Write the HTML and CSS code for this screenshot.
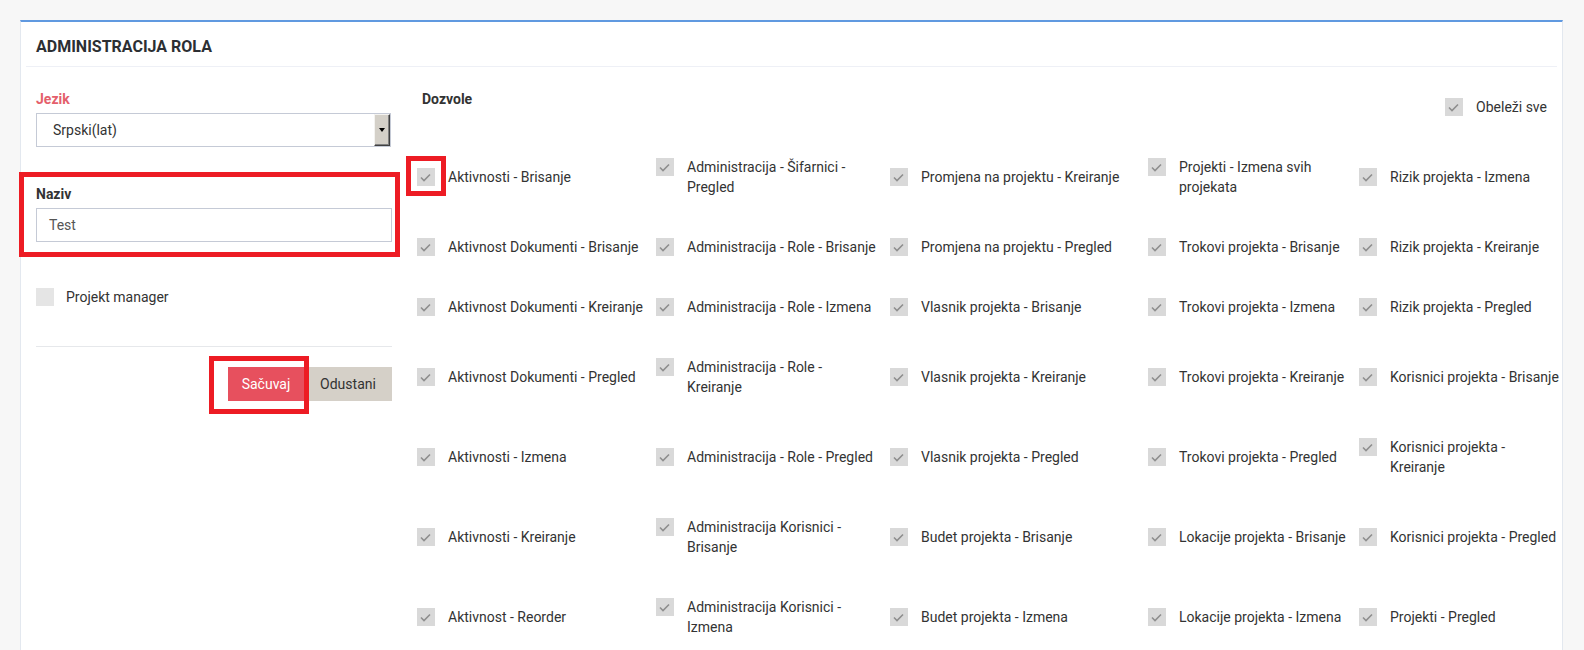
FILE: index.html
```html
<!DOCTYPE html>
<html lang="sr">
<head>
<meta charset="utf-8">
<title>Administracija rola</title>
<link rel="stylesheet" href="styles.css">
</head>
<body>
<section class="panel">
  <header class="panel-head"><h1 class="panel-title">ADMINISTRACIJA ROLA</h1></header>
  <div class="panel-body">
    <div class="form-col">
      <div class="lbl lbl-req">Jezik</div>
      <div class="select"><span class="select-val">Srpski(lat)</span><span class="select-btn"><span class="arrow"></span></span></div>
      <div class="lbl lbl-naziv">Naziv</div>
      <div class="input">Test</div>
      <div class="pm-row"><span class="cb cb-empty"></span><span class="pm-text">Projekt manager</span></div>
      <div class="divider"></div>
      <div class="actions"><button class="btn btn-save">Sačuvaj</button><button class="btn btn-cancel">Odustani</button></div>
    </div>
    <div class="perm-col">
      <div class="perm-head">
        <span class="perm-title">Dozvole</span>
        <span class="perm select-all"><span class="cb"><svg viewBox="0 0 18 18"><path d="M4 9.5 7 12.5 13 6.5"/></svg></span><span class="perm-text">Obeleži sve</span></span>
      </div>
      <div class="perm-grid">
        <div class="perm"><span class="cb"><svg viewBox="0 0 18 18"><path d="M4 9.5 7 12.5 13 6.5"/></svg></span><span class="perm-text">Aktivnosti - Brisanje</span></div>
        <div class="perm"><span class="cb"><svg viewBox="0 0 18 18"><path d="M4 9.5 7 12.5 13 6.5"/></svg></span><span class="perm-text">Administracija - Šifarnici -<br>Pregled</span></div>
        <div class="perm"><span class="cb"><svg viewBox="0 0 18 18"><path d="M4 9.5 7 12.5 13 6.5"/></svg></span><span class="perm-text">Promjena na projektu - Kreiranje</span></div>
        <div class="perm"><span class="cb"><svg viewBox="0 0 18 18"><path d="M4 9.5 7 12.5 13 6.5"/></svg></span><span class="perm-text">Projekti - Izmena svih<br>projekata</span></div>
        <div class="perm"><span class="cb"><svg viewBox="0 0 18 18"><path d="M4 9.5 7 12.5 13 6.5"/></svg></span><span class="perm-text">Rizik projekta - Izmena</span></div>

        <div class="perm"><span class="cb"><svg viewBox="0 0 18 18"><path d="M4 9.5 7 12.5 13 6.5"/></svg></span><span class="perm-text">Aktivnost Dokumenti - Brisanje</span></div>
        <div class="perm"><span class="cb"><svg viewBox="0 0 18 18"><path d="M4 9.5 7 12.5 13 6.5"/></svg></span><span class="perm-text">Administracija - Role - Brisanje</span></div>
        <div class="perm"><span class="cb"><svg viewBox="0 0 18 18"><path d="M4 9.5 7 12.5 13 6.5"/></svg></span><span class="perm-text">Promjena na projektu - Pregled</span></div>
        <div class="perm"><span class="cb"><svg viewBox="0 0 18 18"><path d="M4 9.5 7 12.5 13 6.5"/></svg></span><span class="perm-text">Trokovi projekta - Brisanje</span></div>
        <div class="perm"><span class="cb"><svg viewBox="0 0 18 18"><path d="M4 9.5 7 12.5 13 6.5"/></svg></span><span class="perm-text">Rizik projekta - Kreiranje</span></div>

        <div class="perm"><span class="cb"><svg viewBox="0 0 18 18"><path d="M4 9.5 7 12.5 13 6.5"/></svg></span><span class="perm-text">Aktivnost Dokumenti - Kreiranje</span></div>
        <div class="perm"><span class="cb"><svg viewBox="0 0 18 18"><path d="M4 9.5 7 12.5 13 6.5"/></svg></span><span class="perm-text">Administracija - Role - Izmena</span></div>
        <div class="perm"><span class="cb"><svg viewBox="0 0 18 18"><path d="M4 9.5 7 12.5 13 6.5"/></svg></span><span class="perm-text">Vlasnik projekta - Brisanje</span></div>
        <div class="perm"><span class="cb"><svg viewBox="0 0 18 18"><path d="M4 9.5 7 12.5 13 6.5"/></svg></span><span class="perm-text">Trokovi projekta - Izmena</span></div>
        <div class="perm"><span class="cb"><svg viewBox="0 0 18 18"><path d="M4 9.5 7 12.5 13 6.5"/></svg></span><span class="perm-text">Rizik projekta - Pregled</span></div>

        <div class="perm"><span class="cb"><svg viewBox="0 0 18 18"><path d="M4 9.5 7 12.5 13 6.5"/></svg></span><span class="perm-text">Aktivnost Dokumenti - Pregled</span></div>
        <div class="perm"><span class="cb"><svg viewBox="0 0 18 18"><path d="M4 9.5 7 12.5 13 6.5"/></svg></span><span class="perm-text">Administracija - Role -<br>Kreiranje</span></div>
        <div class="perm"><span class="cb"><svg viewBox="0 0 18 18"><path d="M4 9.5 7 12.5 13 6.5"/></svg></span><span class="perm-text">Vlasnik projekta - Kreiranje</span></div>
        <div class="perm"><span class="cb"><svg viewBox="0 0 18 18"><path d="M4 9.5 7 12.5 13 6.5"/></svg></span><span class="perm-text">Trokovi projekta - Kreiranje</span></div>
        <div class="perm"><span class="cb"><svg viewBox="0 0 18 18"><path d="M4 9.5 7 12.5 13 6.5"/></svg></span><span class="perm-text">Korisnici projekta - Brisanje</span></div>

        <div class="perm"><span class="cb"><svg viewBox="0 0 18 18"><path d="M4 9.5 7 12.5 13 6.5"/></svg></span><span class="perm-text">Aktivnosti - Izmena</span></div>
        <div class="perm"><span class="cb"><svg viewBox="0 0 18 18"><path d="M4 9.5 7 12.5 13 6.5"/></svg></span><span class="perm-text">Administracija - Role - Pregled</span></div>
        <div class="perm"><span class="cb"><svg viewBox="0 0 18 18"><path d="M4 9.5 7 12.5 13 6.5"/></svg></span><span class="perm-text">Vlasnik projekta - Pregled</span></div>
        <div class="perm"><span class="cb"><svg viewBox="0 0 18 18"><path d="M4 9.5 7 12.5 13 6.5"/></svg></span><span class="perm-text">Trokovi projekta - Pregled</span></div>
        <div class="perm"><span class="cb"><svg viewBox="0 0 18 18"><path d="M4 9.5 7 12.5 13 6.5"/></svg></span><span class="perm-text">Korisnici projekta -<br>Kreiranje</span></div>

        <div class="perm"><span class="cb"><svg viewBox="0 0 18 18"><path d="M4 9.5 7 12.5 13 6.5"/></svg></span><span class="perm-text">Aktivnosti - Kreiranje</span></div>
        <div class="perm"><span class="cb"><svg viewBox="0 0 18 18"><path d="M4 9.5 7 12.5 13 6.5"/></svg></span><span class="perm-text">Administracija Korisnici -<br>Brisanje</span></div>
        <div class="perm"><span class="cb"><svg viewBox="0 0 18 18"><path d="M4 9.5 7 12.5 13 6.5"/></svg></span><span class="perm-text">Budet projekta - Brisanje</span></div>
        <div class="perm"><span class="cb"><svg viewBox="0 0 18 18"><path d="M4 9.5 7 12.5 13 6.5"/></svg></span><span class="perm-text">Lokacije projekta - Brisanje</span></div>
        <div class="perm"><span class="cb"><svg viewBox="0 0 18 18"><path d="M4 9.5 7 12.5 13 6.5"/></svg></span><span class="perm-text">Korisnici projekta - Pregled</span></div>

        <div class="perm"><span class="cb"><svg viewBox="0 0 18 18"><path d="M4 9.5 7 12.5 13 6.5"/></svg></span><span class="perm-text">Aktivnost - Reorder</span></div>
        <div class="perm"><span class="cb"><svg viewBox="0 0 18 18"><path d="M4 9.5 7 12.5 13 6.5"/></svg></span><span class="perm-text">Administracija Korisnici -<br>Izmena</span></div>
        <div class="perm"><span class="cb"><svg viewBox="0 0 18 18"><path d="M4 9.5 7 12.5 13 6.5"/></svg></span><span class="perm-text">Budet projekta - Izmena</span></div>
        <div class="perm"><span class="cb"><svg viewBox="0 0 18 18"><path d="M4 9.5 7 12.5 13 6.5"/></svg></span><span class="perm-text">Lokacije projekta - Izmena</span></div>
        <div class="perm"><span class="cb"><svg viewBox="0 0 18 18"><path d="M4 9.5 7 12.5 13 6.5"/></svg></span><span class="perm-text">Projekti - Pregled</span></div>
      </div>
    </div>
  </div>
</section>
<div class="mark mark-naziv"></div>
<div class="mark mark-save"></div>
<div class="mark mark-cb"></div>
</body>
</html>
```

FILE: styles.css
```css
* { box-sizing: border-box; }

html, body {
  margin: 0;
  padding: 0;
  background: #f7f7f7;
  font-family: Roboto, "Liberation Sans", Arial, sans-serif;
  font-size: 14px;
  color: #333;
  overflow: hidden;
}

body { position: relative; min-height: 650px; }

.panel {
  margin: 20px 0 0 20px;
  width: 1543px;
  min-height: 660px;
  background: #fff;
  border-top: 2px solid #6099e0;
  border-left: 1px solid #e3e8ef;
  border-right: 1px solid #e3e8ef;
  padding: 0 5px;
}

.panel-head {
  height: 45px;
  padding: 16px 10px 0;
  border-bottom: 1px solid #eef0f6;
}

.panel-title {
  margin: 0;
  font-size: 16px;
  line-height: 18px;
  font-weight: 700;
  color: #2c2f33;
}

.panel-body {
  display: flex;
  padding: 24px 10px 0;
}

.form-col {
  width: 356px;
  flex: none;
  display: flex;
  flex-direction: column;
}

.lbl {
  font-weight: 700;
  line-height: 16px;
  color: #333;
}

.lbl-req { color: #e45f6c; }

.select {
  margin-top: 6px;
  width: 355px;
  height: 34px;
  border: 1px solid #c5cad6;
  display: flex;
  align-items: stretch;
}

.select-val {
  flex: 1;
  padding-left: 16px;
  line-height: 32px;
  color: #333;
}

.select-btn {
  width: 16px;
  background: #d4d0c8;
  border-top: 1px solid #f4f3f0;
  border-left: 1px solid #f4f3f0;
  border-right: 1px solid #404040;
  border-bottom: 1px solid #404040;
  box-shadow: inset -1px -1px 0 #808080;
  display: flex;
  align-items: center;
  justify-content: center;
}

.arrow {
  width: 0;
  height: 0;
  border-left: 3.5px solid transparent;
  border-right: 3.5px solid transparent;
  border-top: 4px solid #000;
  margin-right: 1px;
}

.lbl-naziv { margin-top: 39px; }

.input {
  margin-top: 6px;
  width: 356px;
  height: 34px;
  border: 1px solid #c5cad6;
  padding-left: 12px;
  line-height: 32px;
  color: #555;
}

.pm-row {
  margin-top: 46px;
  display: flex;
  align-items: center;
  gap: 12px;
  height: 18px;
}

.pm-text { line-height: 20px; color: #333; }

.cb {
  width: 18px;
  height: 18px;
  flex: none;
  background: #d9d9d9;
  display: block;
}

.cb svg {
  display: block;
  width: 18px;
  height: 18px;
}

.cb path {
  fill: none;
  stroke: #8e8e8e;
  stroke-width: 1.6;
}

.cb-empty { background: #e5e5e5; }

.divider {
  margin-top: 40px;
  height: 1px;
  background: #e6e8eb;
}

.actions {
  margin-top: 20px;
  display: flex;
  justify-content: flex-end;
}

.btn {
  height: 34px;
  border: 0;
  margin: 0;
  padding: 0;
  font-family: inherit;
  font-size: 14px;
  cursor: pointer;
}

.btn-save {
  width: 76px;
  background: #e7505e;
  color: #fff;
}

.btn-cancel {
  width: 88px;
  background: #d5d0c8;
  color: #333;
}

.perm-col {
  flex: 1;
  margin-left: 25px;
  min-width: 0;
}

.perm-head {
  height: 46px;
  display: flex;
  justify-content: space-between;
  align-items: flex-start;
}

.perm-title {
  padding-left: 5px;
  font-weight: 700;
  line-height: 16px;
  color: #333;
}

.perm {
  display: flex;
  align-items: flex-start;
  gap: 13px;
}

.perm .cb { margin-top: 1px; }

.perm-text {
  line-height: 20px;
  white-space: nowrap;
  color: #333;
}

.select-all { margin-top: 6px; }

.perm-grid {
  display: grid;
  grid-template-columns: 239px 234px 258px 211px max-content;
  align-items: center;
}

.perm-grid .perm { padding: 20px 0; }

.mark {
  position: absolute;
  border: 5px solid #ed1c24;
}

.mark-naziv { left: 19px; top: 172px; width: 381px; height: 85px; }
.mark-save { left: 209px; top: 356px; width: 100px; height: 58px; }
.mark-cb { left: 406px; top: 156px; width: 40px; height: 40px; }
```
